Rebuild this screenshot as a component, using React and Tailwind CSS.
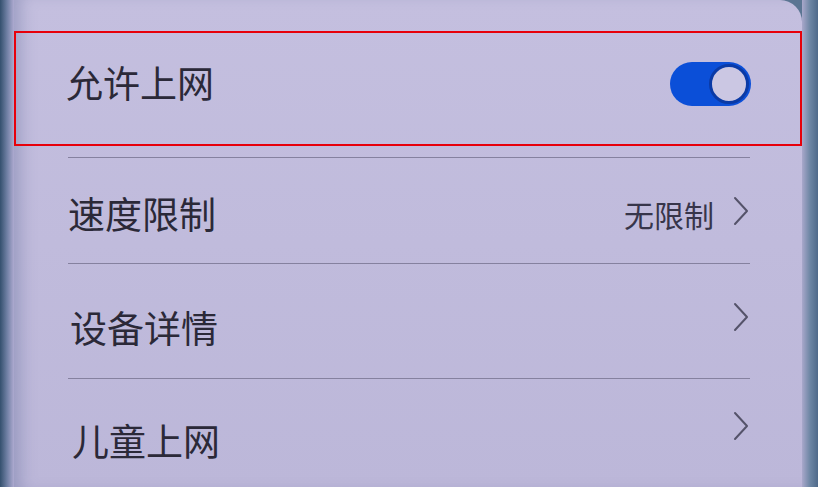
import React from "react";

const font = { fontFamily: '"Noto Sans CJK SC", "Noto Sans", sans-serif' };

function Chevron({ className = "" }) {
  return (
    <svg width="18" height="30" viewBox="0 0 18 30" className={className}>
      <path d="M3 2 L15 15 L3 28" fill="none" stroke="#55536a" strokeWidth="2" strokeLinecap="round" strokeLinejoin="round" />
    </svg>
  );
}

export default function App() {
  return (
    <div className="w-[818px] h-[487px] overflow-hidden flex bg-[#5b7593]" style={font}>
      <div className="w-[14px] h-full bg-gradient-to-r from-[#34506e] via-[#6f7fa3] to-[#aeaad0]" />
      <div className="flex-1 h-full flex flex-col rounded-tr-[22px] bg-gradient-to-b from-[#c4bfdf] to-[#bcb7d9] shadow-[inset_14px_0_16px_-8px_rgba(80,95,140,0.35)]">
        <div className="h-[31px]" />
        <div className="h-[115px] border-2 border-red-600 flex items-center justify-between pl-[50px] pr-[49px]">
          <span className="text-[37px] leading-none text-[#2b2938] -mt-[12px]">允许上网</span>
          <div className="w-[81px] h-[44px] -mt-[10px] rounded-full bg-[#0b4fd8] flex items-center justify-end p-[2px]">
            <div className="w-[40px] h-[40px] rounded-full bg-[#cbc7e3] border-[3px] border-[#0a3aa6]" />
          </div>
        </div>
        <div className="ml-[54px] mr-[52px] flex flex-col">
          <div className="h-[11px]" />
          <div className="h-px bg-[#85819f]" />
          <div className="h-[105px] flex items-center justify-between pt-[6px]">
            <span className="text-[37px] leading-none text-[#2b2938]">速度限制</span>
            <div className="flex items-center gap-[18px]">
              <span className="text-[30px] leading-none text-[#37354a]">无限制</span>
              <Chevron className="-mt-[6px]" />
            </div>
          </div>
          <div className="h-px bg-[#85819f]" />
          <div className="h-[114px] flex items-center justify-between pl-[2px]">
            <span className="text-[37px] leading-none text-[#2b2938] pt-[12px]">设备详情</span>
            <Chevron className="-mt-[8px]" />
          </div>
          <div className="h-px bg-[#85819f]" />
          <div className="h-[108px] flex items-center justify-between pl-[4px]">
            <span className="text-[37px] leading-none text-[#2b2938] pt-[14px]">儿童上网</span>
            <Chevron className="-mt-[14px]" />
          </div>
        </div>
      </div>
      <div className="w-[16px] h-full bg-gradient-to-r from-[#a9a8cb] via-[#6d86a4] to-[#4f6a8a]" />
    </div>
  );
}
